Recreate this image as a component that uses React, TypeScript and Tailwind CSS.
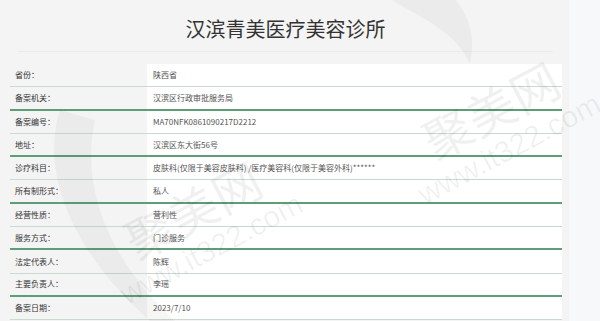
import React from 'react';

const rows: [string, string][] = [
  ['省份：', '陕西省'],
  ['备案机关：', '汉滨区行政审批服务局'],
  ['备案编号：', 'MA70NFK0861090217D2212'],
  ['地址：', '汉滨区东大街56号'],
  ['诊疗科目：', '皮肤科(仅限于美容皮肤科) /医疗美容科(仅限于美容外科)******'],
  ['所有制形式：', '私人'],
  ['经营性质：', '营利性'],
  ['服务方式：', '门诊服务'],
  ['法定代表人：', '陈辉'],
  ['主要负责人：', '李瑶'],
  ['备案日期：', '2023/7/10'],
];

function Watermark({ className }: { className: string }) {
  return (
    <div aria-hidden className={`absolute w-[300px] whitespace-nowrap pointer-events-none select-none ${className}`}>
      <div className="-rotate-[28deg] origin-top-left text-[rgba(0,0,0,0.06)]">
        <div className="text-[48px] leading-none tracking-[1px] pl-[14px]">聚美网</div>
        <div className="text-[30px] leading-none mt-[6px] -ml-[16px] font-['Liberation_Sans',sans-serif]">www.it322.com</div>
      </div>
    </div>
  );
}

export default function App() {
  return (
    <div className="relative flex w-[600px] h-[321px] overflow-hidden bg-[#f7f8fa] font-['Noto_Sans_CJK_SC','Noto_Sans',sans-serif]">
      <div className="w-[569px] shrink-0 bg-[#f4f4f4] flex flex-col">
        {/* Title */}
        <div className="h-[52px] mx-[18px] w-[535px] flex items-center justify-center pt-[6px] border-b border-[#ebebeb]">
          <h1 className="text-[20px] text-[#333] leading-none">汉滨青美医疗美容诊所</h1>
        </div>

        {/* Info table */}
        <div className="mt-[12px] ml-[10px] w-[552px] flex flex-col">
          {rows.map(([label, value], i) => (
            <div
              key={label}
              className={
                i % 2 === 0
                  ? 'flex h-[23.3px] border-b border-[#c9dbd0]'
                  : 'flex h-[23.3px] border-b-2 border-[#5f9d78]'
              }
            >
              <div className="w-[137px] pl-[5px] flex items-center text-[8px] text-[#333]">{label}</div>
              <div className="flex-1 bg-white pl-[6px] flex items-center text-[8px] text-[#555]">{value}</div>
            </div>
          ))}
        </div>
      </div>

      {/* Faint swoosh marks */}
      <svg className="absolute left-0 top-0 pointer-events-none" width="600" height="321" viewBox="0 0 600 321">
        <path d="M392 0 C420 18 455 30 470 64 C476 40 470 18 456 0 Z" fill="rgba(0,0,0,0.035)" />
        <path d="M60 110 C40 170 70 250 150 321 L175 321 C110 260 80 190 95 120 Z" fill="rgba(0,0,0,0.035)" />
      </svg>

      <Watermark className="left-[402px] top-[128px]" />
      <Watermark className="left-[104px] top-[228px]" />
    </div>
  );
}
